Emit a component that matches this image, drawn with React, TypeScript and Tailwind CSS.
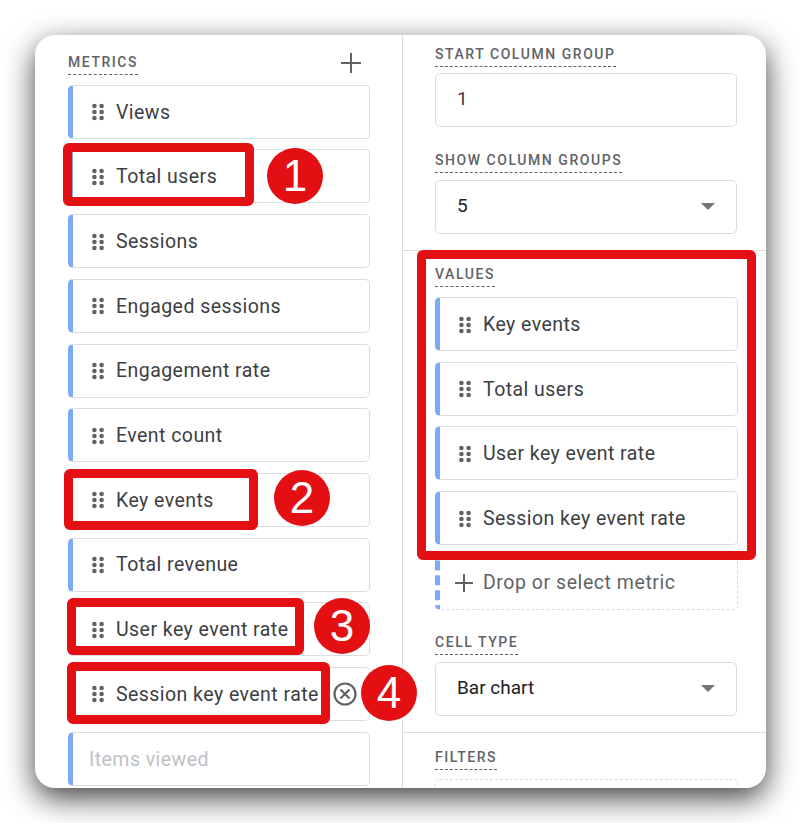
import type { ReactNode } from 'react'

function Grip() {
  return (
    <svg width="12" height="18" viewBox="0 0 12 18" className="shrink-0 fill-[#5f6368]">
      <circle cx="2.4" cy="3" r="2.3" />
      <circle cx="9.6" cy="3" r="2.3" />
      <circle cx="2.4" cy="9" r="2.3" />
      <circle cx="9.6" cy="9" r="2.3" />
      <circle cx="2.4" cy="15" r="2.3" />
      <circle cx="9.6" cy="15" r="2.3" />
    </svg>
  )
}

function Label({ children }: { children: ReactNode }) {
  return (
    <span className="block w-fit border-b border-dashed border-[#5f6368] pb-[2px] text-[14px] leading-[20px] font-medium tracking-[1.55px] text-[#5f6368]">
      {children}
    </span>
  )
}

function Chip({ text, muted, remove }: { text: string; muted?: boolean; remove?: boolean }) {
  return (
    <div className="flex h-[54px] items-center rounded-[5px] border border-[#dadce0] border-l-[5px] border-l-[#7baaf7] bg-white pt-[1px] pl-[19px] text-[19.5px] tracking-[0.45px] text-[#3c4043]">
      {muted ? (
        <span className="-ml-[3px] text-[#bdc1c6]">{text}</span>
      ) : (
        <>
          <Grip />
          <span className="ml-[12px]">{text}</span>
        </>
      )}
      {remove && (
        <svg width="24" height="24" viewBox="0 0 24 24" className="ml-[14px] shrink-0 fill-none stroke-[#5f6368] stroke-[2.2]">
          <circle cx="12" cy="12" r="10.5" />
          <path d="M7.5 7.5l9 9M16.5 7.5l-9 9" />
        </svg>
      )}
    </div>
  )
}

function Select({ text, light }: { text: string; light?: boolean }) {
  return (
    <div className="flex h-[54px] items-center justify-between rounded-[5px] border border-[#dadce0] bg-white px-[21px] pb-[1px] text-[19px] text-[#202124]">
      <span className={light ? 'text-[#3c4043]' : ''}>{text}</span>
      {!light && <span className="h-0 w-0 border-x-[7px] border-t-[7px] border-x-transparent border-t-[#757575]" />}
    </div>
  )
}

function Badge({ n, className }: { n: number; className: string }) {
  return (
    <div className={`absolute flex h-[56px] w-[56px] items-center justify-center rounded-full bg-[#e30f13] font-['Liberation_Sans',sans-serif] text-[44px] text-white ${className}`}>
      {n}
    </div>
  )
}

const metrics = ['Views', 'Total users', 'Sessions', 'Engaged sessions', 'Engagement rate', 'Event count', 'Key events', 'Total revenue', 'User key event rate']
const values = ['Key events', 'Total users', 'User key event rate', 'Session key event rate']
const frame = 'absolute rounded-[6px] border-[9px] border-[#e30f13]'

export default function App() {
  return (
    <div className="h-[823px] w-[801px] overflow-hidden bg-white pt-[35px] pl-[35px] font-['Roboto',sans-serif]">
      <div className="relative h-[753px] w-[731px] rounded-[20px] bg-white shadow-[0_10px_30px_rgba(0,0,0,0.75)]">
        <div className="flex h-full overflow-hidden rounded-[20px]">
          <div className="w-[368px] shrink-0 border-r border-[#dadce0] pt-[17px] pr-[32px] pl-[33px]">
            <div className="flex h-[32.75px] items-start justify-between">
              <Label>METRICS</Label>
              <svg width="20" height="20" viewBox="0 0 20 20" className="mt-[1px] mr-[9px] stroke-[#5f6368] stroke-2">
                <path d="M10 0v20M0 10h20" />
              </svg>
            </div>
            <div className="flex flex-col gap-[10.7px]">
              {metrics.map((m) => (
                <Chip key={m} text={m} />
              ))}
              <Chip text="Session key event rate" remove />
              <Chip text="Items viewed" muted />
            </div>
          </div>

          <div className="flex-1">
            <div className="h-[216px] border-b border-[#dadce0] pt-[9px] pr-[29px] pl-[32px]">
              <Label>START COLUMN GROUP</Label>
              <div className="mt-[6px]">
                <Select text="1" light />
              </div>
              <div className="mt-[23px]">
                <Label>SHOW COLUMN GROUPS</Label>
              </div>
              <div className="mt-[7px]">
                <Select text="5" />
              </div>
            </div>
            <div className="h-[482px] border-b border-[#dadce0] pt-[13px] pr-[28px] pl-[32px]">
              <Label>VALUES</Label>
              <div className="mt-[10px] flex flex-col gap-[10.7px]">
                {values.map((v) => (
                  <Chip key={v} text={v} />
                ))}
                <div className="flex h-[54px] items-center rounded-[5px] border border-dashed border-[#dadce0] border-l-[5px] border-l-[#7baaf7] pl-[14px] text-[19.5px] tracking-[0.55px] text-[#5f6368]">
                  <svg width="20" height="20" viewBox="0 0 20 20" className="stroke-[#5f6368] stroke-2">
                    <path d="M10 1v18M1 10h18" />
                  </svg>
                  <span className="ml-[9px]">Drop or select metric</span>
                </div>
              </div>
              <div className="mt-[22px]">
                <Label>CELL TYPE</Label>
              </div>
              <div className="mt-[7px] mr-[1px]">
                <Select text="Bar chart" />
              </div>
            </div>
            <div className="pt-[14px] pr-[28px] pl-[32px]">
              <Label>FILTERS</Label>
              <div className="mt-[9px] h-[54px] rounded-[5px] border border-dashed border-[#dadce0]" />
            </div>
          </div>
        </div>

        <div className={`${frame} top-[108px] left-[28px] h-[63px] w-[191px]`} />
        <div className={`${frame} top-[434px] left-[29px] h-[61px] w-[194px]`} />
        <div className={`${frame} top-[563px] left-[32px] h-[57px] w-[237px]`} />
        <div className={`${frame} top-[627px] left-[32px] h-[62px] w-[263px]`} />
        <div className={`${frame} top-[215px] left-[382px] h-[310px] w-[339px]`} />
        <Badge n={1} className="top-[113px] left-[232px]" />
        <Badge n={2} className="top-[435px] left-[239px]" />
        <Badge n={3} className="top-[563px] left-[279px]" />
        <Badge n={4} className="top-[630px] left-[326px]" />
      </div>
    </div>
  )
}
